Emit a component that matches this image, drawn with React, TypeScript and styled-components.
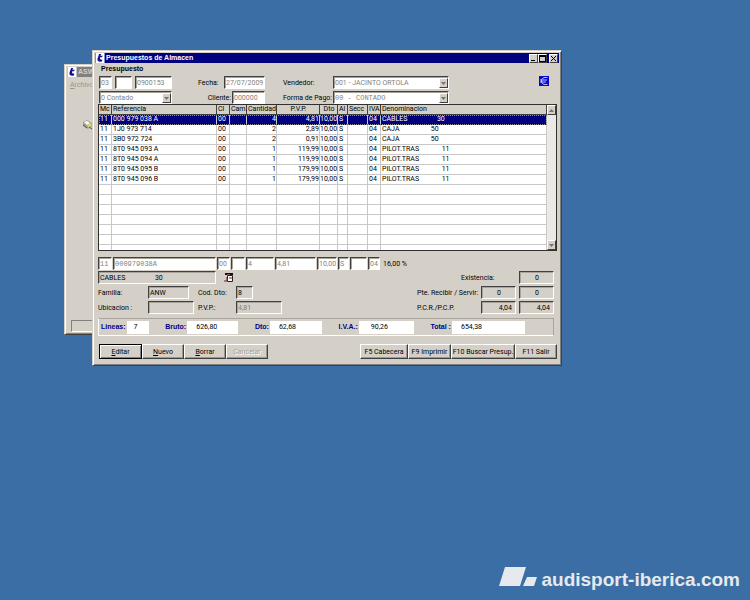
import React from "react";
import styled, { createGlobalStyle, css } from "styled-components";

const face = "#d4d0c8";
const shadow = "#808080";
const navy = "#000080";
const sans = `Roboto, "Liberation Sans", sans-serif`;
const bold = `bold 7px/12px "Liberation Sans", sans-serif`;
const mono = `"Liberation Mono", monospace`;

const GlobalStyle = createGlobalStyle`
  *, *::before, *::after { box-sizing: border-box; }
  html, body { margin: 0; background: #3a6ea5; }
  body { font: 7px/10px ${sans}; color: #000; }
  input, select, button { font: inherit; color: inherit; margin: 0; border-radius: 0; }
`;

const raised = css`
  border: 1px solid;
  border-color: #fff #404040 #404040 #fff;
`;
const sunken = css`
  border: 1px solid;
  border-color: #404040 #fff #fff #404040;
  box-shadow: inset 1px 1px 0 #a8a49c;
`;

const Desktop = styled.main`
  position: relative;
  min-height: 100vh;
  display: flex;
  flex-direction: column;
  justify-content: flex-end;
  align-items: flex-end;
  overflow: hidden;
`;

const Frame = styled.section`
  position: absolute;
  background: ${face};
  border: 1px solid;
  border-color: ${face} #404040 #404040 ${face};
  box-shadow: inset 1px 1px 0 #fff, inset -1px -1px 0 ${shadow};
  padding: 2px;
`;
const BackFrame = styled(Frame)`
  left: 64px;
  top: 64px;
  width: 200px;
  height: 271px;
  display: flex;
  flex-direction: column;
`;
const FrontFrame = styled(Frame)`
  left: 92px;
  right: 188px;
  top: 50px;
  min-width: 470px;
`;

const TitleBar = styled.header<{ $inactive?: boolean }>`
  display: flex;
  align-items: center;
  gap: 1px;
  height: 10px;
  padding-right: 1px;
  background: ${(p) => (p.$inactive ? shadow : navy)};
  color: ${(p) => (p.$inactive ? face : "#fff")};
`;
const Title = styled.h1`
  flex: 1;
  margin: 0;
  font: ${bold};
  line-height: 10px;
  white-space: nowrap;
`;
const CaptionButton = styled.button`
  ${raised}
  display: flex;
  width: 9px;
  height: 9px;
  padding: 0;
  background: ${face};
  align-items: center;
  justify-content: center;
`;
const CaptionGroup = styled.div`
  display: flex;
  margin-right: 1px;
`;

const MenuText = styled.nav`
  padding: 3px;
  color: #99958d;
`;
const BackBody = styled.div`
  flex: 1;
  padding: 26px 15px;
`;
const StatusBox = styled.div`
  height: 12px;
  margin: 0 4px;
  border: 1px solid;
  border-color: ${shadow} #fff #fff ${shadow};
`;

const Form = styled.form`
  padding: 0 2px 4px 3px;
`;
const Heading = styled.h2`
  margin: 0;
  padding-left: 3px;
  font: ${bold};
`;

const HeadFields = styled.div`
  display: grid;
  grid-template-columns: 73px 93px 68px auto 1fr;
  row-gap: 2px;
  padding-left: 1px;
  margin-top: 1px;
`;
const Group = styled.div<{ $gap?: number; $end?: boolean }>`
  display: flex;
  align-items: center;
  gap: ${(p) => p.$gap ?? 0}px;
  justify-content: ${(p) => (p.$end ? "flex-end" : "flex-start")};
`;
const Label = styled.label`
  white-space: nowrap;
`;
const DateLabel = styled(Label)`
  width: 52px;
  padding-left: 26px;
`;
const LabelCell = styled.div`
  display: flex;
  align-items: center;
  padding-left: 18px;
`;
const EuroCell = styled.div`
  display: flex;
  justify-content: flex-end;
  padding-right: 8px;
`;

const Field = styled.input<{ $w?: number; $mono?: boolean; $gray?: boolean; $dim?: boolean }>`
  ${sunken}
  width: ${(p) => (p.$w ? `${p.$w}px` : "100%")};
  height: 13px;
  padding: 0 0 0 1px;
  background: ${(p) => (p.$gray ? face : "#fff")};
  color: ${(p) => (p.$dim ? "#85817b" : "#000")};
  font: 7px/10px ${(p) => (p.$mono ? mono : sans)};
  outline: none;
`;
const NumField = styled(Field)<{ $center?: boolean }>`
  width: 35px;
  padding-right: ${(p) => (p.$center ? 0 : 3)}px;
  text-align: ${(p) => (p.$center ? "center" : "right")};
`;

const Combo = styled.div<{ $w: number }>`
  ${sunken}
  display: flex;
  width: ${(p) => p.$w}px;
  height: 13px;
  padding: 1px 0 0 1px;
  background: #fff;
`;
const ComboSelect = styled.select<{ $mono?: boolean }>`
  appearance: none;
  flex: 1;
  min-width: 0;
  padding: 0;
  border: 0;
  background: transparent;
  color: #85817b;
  opacity: 1;
  font: 7px/10px ${(p) => (p.$mono ? mono : sans)};
`;
const ArrowBox = styled.span`
  ${raised}
  display: flex;
  align-items: center;
  justify-content: center;
  width: 9px;
  background: ${face};
`;

const GridBox = styled.div`
  display: flex;
  height: 147px;
  border: 1px solid #303030;
  background: #fff;
`;
const Lines = styled.table`
  flex: 1;
  width: 0;
  table-layout: fixed;
  border-collapse: separate;
  border-spacing: 0;
`;
const Th = styled.th<{ $align?: string }>`
  height: 10px;
  padding: 0 0 0 1px;
  background: ${face};
  border-right: 1px solid #404040;
  border-bottom: 1px solid #404040;
  font-weight: normal;
  line-height: 9px;
  text-align: ${(p) => p.$align ?? "left"};
  white-space: nowrap;
`;
const Td = styled.td<{ $right?: boolean }>`
  height: 10px;
  padding: 0 0 0 ${(p) => (p.$right ? 0 : 1)}px;
  border-right: 1px solid #c8c8c8;
  border-bottom: 1px solid #c8c8c8;
  line-height: 9px;
  text-align: ${(p) => (p.$right ? "right" : "left")};
  white-space: pre;
`;
const Tr = styled.tr<{ $selected?: boolean; $last?: boolean }>`
  ${(p) =>
    p.$selected &&
    css`
      color: #fff;
      background: ${navy};
      outline: 1px dotted #8c8c90;
      outline-offset: -1px;
      td { border-bottom-color: ${navy}; }
    `}
  ${(p) =>
    p.$last &&
    css`
      td { height: 5px; line-height: 4px; border-bottom: 0; }
    `}
`;
const Scroll = styled.div`
  display: flex;
  flex-direction: column;
  justify-content: space-between;
  width: 9px;
  background: #ebe9e4;
  span { height: 10px; width: 9px; }
`;

const EditRow = styled.div`
  display: flex;
  align-items: center;
  gap: 1px;
  margin-top: 6px;
`;
const Rate = styled.output`
  margin-left: 2px;
`;

const Details = styled.div`
  display: flex;
  justify-content: space-between;
  margin-top: 1px;
  padding-right: 3px;
`;
const Stack = styled.div`
  display: grid;
  row-gap: 2px;
`;
const FamilyGrid = styled.div`
  display: grid;
  grid-template-columns: 50px 50px 38px auto;
  row-gap: 2px;
  align-items: center;
`;
const StockGrid = styled.div`
  display: grid;
  grid-template-columns: 61px 35px 35px;
  column-gap: 3px;
  row-gap: 2px;
  align-items: center;
`;
const StockLabel = styled.span<{ $indent?: boolean }>`
  white-space: nowrap;
  ${(p) => p.$indent && "grid-column: span 2; padding-left: 44px;"}
`;

const Totals = styled.div`
  display: flex;
  align-items: center;
  justify-content: space-between;
  height: 18px;
  margin: 4px 3px 0 0;
  padding: 0 28px 0 2px;
  border: 1px solid;
  border-color: #aaa69e #aaa69e #fff #fff;
`;
const Total = styled.label`
  display: flex;
  align-items: center;
  gap: 1px;
  color: ${navy};
  font: ${bold};
  white-space: nowrap;
`;
const TotalInput = styled.input<{ $w: number; $pad?: number }>`
  width: ${(p) => p.$w}px;
  height: 13px;
  padding: 0 0 0 ${(p) => p.$pad ?? 9}px;
  border: 0;
  background: #fff;
  color: #000;
  font: 7px/12px ${sans};
`;

const Actions = styled.div`
  display: flex;
  justify-content: space-between;
  margin-top: 8px;
  padding-left: 1px;
`;
const Button = styled.button<{ $w: number; $primary?: boolean }>`
  width: ${(p) => p.$w}px;
  height: 15px;
  padding: 0;
  background: ${face};
  border: 1px solid;
  border-color: #fff #404040 #404040 #fff;
  box-shadow: inset -1px -1px 0 #9c988f;
  white-space: nowrap;
  ${(p) =>
    p.$primary &&
    css`
      border-color: #000;
      box-shadow: inset 1px 1px 0 #fff, inset -1px -1px 0 ${shadow};
    `}
  &:disabled { color: #a5a198; text-shadow: 1px 1px 0 #fff; }
`;

const Brand = styled.footer`
  display: flex;
  align-items: flex-end;
  gap: 5px;
  padding: 0 10px 8px 0;
  color: #e6e9ee;
  font: bold 19px/24px "Liberation Sans", sans-serif;
  svg { margin-bottom: 6px; }
`;

const Arrow = ({ up }: { up?: boolean }) => (
  <svg width="5" height="3" viewBox="0 0 5 3" fill="#77736c" aria-hidden="true">
    <path d={up ? "M0 3h5L2.5 0z" : "M0 0h5L2.5 3z"} />
  </svg>
);

const AppIcon = () => (
  <svg width="10" height="10" viewBox="0 0 10 11" aria-hidden="true">
    <path d="M0 0h10v11H0z" fill="#fff" />
    <path d="M4 1h2.5L5.3 3H8L7.2 4.6H5.2C4.6 6.4 5.2 7.5 7.6 7.4L7 9.3C4.2 10.4 1.7 9 2.2 6.3z" fill="#10109a" />
  </svg>
);

const EuroIcon = () => (
  <svg width="10" height="10" viewBox="0 0 10 10" aria-hidden="true">
    <path d="M0 0h10v10H0z" fill="#0808c8" />
    <path d="M8.5 1.5H5L2.5 3.5V6.5L5 8.5H8.5M1 4h7M1 6h6" fill="none" stroke="#cdd4ff" strokeWidth="0.9" />
  </svg>
);

const FormIcon = () => (
  <svg width="10" height="9" viewBox="0 0 10 9" aria-hidden="true">
    <path d="M3.5 2.5h5v6h-5z" fill="#fff" stroke="#282020" />
    <path d="M1 0h8v2H1z" fill="#181010" />
    <path d="M3 1h3v1H3z" fill="#c03040" />
    <path d="M0 8h3V4M5 5h3" fill="none" stroke="#6a2028" />
  </svg>
);

const ToolIcon = () => (
  <svg width="11" height="11" viewBox="0 0 11 11" aria-hidden="true">
    <path d="M1 3l4-2 5 3v4L6 10 1 7z" fill="#a5a294" />
    <path d="M2 3l3-1 3 2-3 2z" fill="#fbfbf4" />
    <path d="M5 6l3-2 2 2-3 3z" fill="#d8d47c" />
    <path d="M1 6l4 3M7 8l3 2" stroke="#55534c" fill="none" />
  </svg>
);

const columns: { label: string; width?: number; align?: string }[] = [
  { label: "Mc", width: 13 },
  { label: "Referencia", width: 105 },
  { label: "Cl", width: 13 },
  { label: "Cam.", width: 17 },
  { label: "Cantidad", width: 30, align: "right" },
  { label: "P.V.P.", width: 43, align: "center" },
  { label: "Dto", width: 18, align: "center" },
  { label: "Al", width: 10 },
  { label: "Secc", width: 20 },
  { label: "IVA", width: 13 },
  { label: "Denominacion" },
];

const pilot = "PILOT.TRAS" + " ".repeat(13) + "11";
const cables = "CABLES" + " ".repeat(17) + "30";
const caja = "CAJA" + " ".repeat(18) + "50";
const rows = [
  ["000 979 038 A", "4", "4,81", cables],
  ["1J0 973 714", "2", "2,89", caja],
  ["3B0 972 724", "2", "0,91", caja],
  ["8T0 945 093 A", "1", "119,99", pilot],
  ["8T0 945 094 A", "1", "119,99", pilot],
  ["8T0 945 095 B", "1", "179,99", pilot],
  ["8T0 945 096 B", "1", "179,99", pilot],
].map(([ref, qty, price, name]) => ["11", ref, "00", "", qty, price, "10,00", "S", "", "04", name]);
const blank = columns.map(() => "");

const editFields = [
  { name: "Mc", value: "11", w: 14, mono: true },
  { name: "Referencia", value: "000979038A", w: 103, mono: true },
  { name: "Cl", value: "00", w: 13 },
  { name: "Cam.", value: "", w: 14 },
  { name: "Cantidad", value: "4", w: 28 },
  { name: "P.V.P.", value: "4,81", w: 41 },
  { name: "Dto", value: "10,00", w: 20 },
  { name: "Al", value: "S", w: 11 },
  { name: "Secc", value: "", w: 17 },
  { name: "IVA", value: "04", w: 12 },
];

const totals = [
  { label: "Lineas:", value: "7", w: 22, pad: 7 },
  { label: "Bruto:", value: "626,80", w: 51 },
  { label: "Dto:", value: "62,68", w: 52 },
  { label: "I.V.A.:", value: "90,26", w: 55, pad: 12 },
  { label: "Total :", value: "654,38", w: 73 },
];

function ComboBox({ id, label, value, w, mono: m }: { id: string; label?: string; value: string; w: number; mono?: boolean }) {
  return (
    <Combo $w={w}>
      <ComboSelect id={id} aria-label={label} $mono={m} disabled>
        <option>{value}</option>
      </ComboSelect>
      <ArrowBox><Arrow /></ArrowBox>
    </Combo>
  );
}

function BackWindow() {
  return (
    <BackFrame aria-label="ASW">
      <TitleBar $inactive>
        <AppIcon />
        <Title as="span">ASW</Title>
      </TitleBar>
      <MenuText><u>A</u>rchivo</MenuText>
      <BackBody><ToolIcon /></BackBody>
      <StatusBox />
    </BackFrame>
  );
}

function LinesGrid() {
  const line = (cells: string[], key: number, last?: boolean) => (
    <Tr key={key} $selected={key === 0} $last={last}>
      {cells.map((c, i) => (
        <Td key={i} $right={i >= 4 && i <= 6}>{c}</Td>
      ))}
    </Tr>
  );
  return (
    <GridBox>
      <Lines>
        <colgroup>
          {columns.map((c) => <col key={c.label} width={c.width} />)}
        </colgroup>
        <thead>
          <tr>{columns.map((c) => <Th key={c.label} $align={c.align}>{c.label}</Th>)}</tr>
        </thead>
        <tbody>
          {rows.map((r, i) => line(r, i))}
          {Array.from({ length: 7 }, (_, i) => line(blank, rows.length + i, i === 6))}
        </tbody>
      </Lines>
      <Scroll>
        <ArrowBox><Arrow up /></ArrowBox>
        <ArrowBox><Arrow /></ArrowBox>
      </Scroll>
    </GridBox>
  );
}

export default function App() {
  return (
    <Desktop>
      <GlobalStyle />
      <BackWindow />
      <FrontFrame aria-label="Presupuestos de Almacen">
        <TitleBar>
          <AppIcon />
          <Title>Presupuestos de Almacen</Title>
          <CaptionGroup>
            <CaptionButton aria-label="Minimizar">
              <svg width="7" height="7" viewBox="0 0 7 7"><path d="M1 5h4v1H1z" /></svg>
            </CaptionButton>
            <CaptionButton aria-label="Maximizar">
              <svg width="7" height="7" viewBox="0 0 7 7"><path d="M0 0h7v7H0zM1 2v4h5V2z" fillRule="evenodd" /></svg>
            </CaptionButton>
          </CaptionGroup>
          <CaptionButton aria-label="Cerrar">
            <svg width="7" height="7" viewBox="0 0 7 7"><path d="M1 1l5 5M6 1L1 6" stroke="#000" /></svg>
          </CaptionButton>
        </TitleBar>
        <Form onSubmit={(e) => e.preventDefault()}>
          <Heading>Presupuesto</Heading>
          <HeadFields>
            <Group $gap={3}>
              <Field $w={13} $dim aria-label="Serie" defaultValue="03" />
              <Field $w={17} $dim aria-label="Tipo" defaultValue="" />
              <Field $w={37} $dim aria-label="Numero" defaultValue="0900153" />
            </Group>
            <Group>
              <DateLabel htmlFor="fecha">Fecha:</DateLabel>
              <Field id="fecha" $w={41} $dim defaultValue="27/07/2009" />
            </Group>
            <LabelCell><Label htmlFor="vendedor">Vendedor:</Label></LabelCell>
            <ComboBox id="vendedor" value="001 - JACINTO ORTOLA" w={116} />
            <EuroCell><EuroIcon /></EuroCell>
            <ComboBox id="cliente-tipo" label="Tipo de cliente" value="0 Contado" w={73} />
            <Group $end $gap={1}>
              <Label htmlFor="cliente">Cliente:</Label>
              <Field id="cliente" $w={33} $dim defaultValue="000000" />
            </Group>
            <LabelCell><Label htmlFor="pago">Forma de Pago:</Label></LabelCell>
            <ComboBox id="pago" value="00 - CONTADO" w={116} mono />
          </HeadFields>
          <LinesGrid />
          <EditRow>
            {editFields.map((f) => (
              <Field key={f.name} aria-label={f.name} defaultValue={f.value} $w={f.w} $mono={f.mono} $dim />
            ))}
            <Rate>16,00 %</Rate>
          </EditRow>
          <Details>
            <Stack>
              <Group $gap={8}>
                <Field $w={118} $gray readOnly aria-label="Articulo" value={cables} />
                <FormIcon />
              </Group>
              <FamilyGrid>
                <Label htmlFor="familia">Familia:</Label>
                <Field id="familia" $w={41} $gray readOnly value="ANW" />
                <Label htmlFor="coddto">Cod. Dto:</Label>
                <Field id="coddto" $w={17} $gray readOnly value="8" />
                <Label htmlFor="ubicacion">Ubicacion :</Label>
                <Field id="ubicacion" $w={46} $gray readOnly value="" />
                <Label htmlFor="pvp">P.V.P.:</Label>
                <Field id="pvp" $w={46} $gray $dim readOnly value="4,81" />
              </FamilyGrid>
            </Stack>
            <StockGrid>
              <StockLabel $indent>Existencia:</StockLabel>
              <NumField $gray $center readOnly aria-label="Existencia" value="0" />
              <StockLabel>Pte. Recibir / Servir:</StockLabel>
              <NumField $gray $center readOnly aria-label="Pendiente de recibir" value="0" />
              <NumField $gray $center readOnly aria-label="Pendiente de servir" value="0" />
              <StockLabel>P.C.R./P.C.P.</StockLabel>
              <NumField $gray readOnly aria-label="P.C.R." value="4,04" />
              <NumField $gray readOnly aria-label="P.C.P." value="4,04" />
            </StockGrid>
          </Details>
          <Totals>
            {totals.map((t) => (
              <Total key={t.label}>
                {t.label}
                <TotalInput $w={t.w} $pad={t.pad} readOnly value={t.value} />
              </Total>
            ))}
          </Totals>
          <Actions>
            <Group>
              <Button type="button" $w={43} $primary><u>E</u>ditar</Button>
              <Button type="button" $w={42}><u>N</u>uevo</Button>
              <Button type="button" $w={42}><u>B</u>orrar</Button>
              <Button type="button" $w={42} disabled>Cancelar</Button>
            </Group>
            <Group>
              <Button type="button" $w={48}>F5 Cabecera</Button>
              <Button type="button" $w={43}>F9 Imprimir</Button>
              <Button type="button" $w={64}>F10 Buscar Presup.</Button>
              <Button type="button" $w={42}>F11 Salir</Button>
            </Group>
          </Actions>
        </Form>
      </FrontFrame>
      <Brand>
        <svg width="38" height="19" viewBox="0 0 38 19" fill="currentColor" aria-hidden="true">
          <path d="M6 0h21l-6 19H0zM28 10h10l-3 9H24z" />
        </svg>
        <span>audisport-iberica.com</span>
      </Brand>
    </Desktop>
  );
}
